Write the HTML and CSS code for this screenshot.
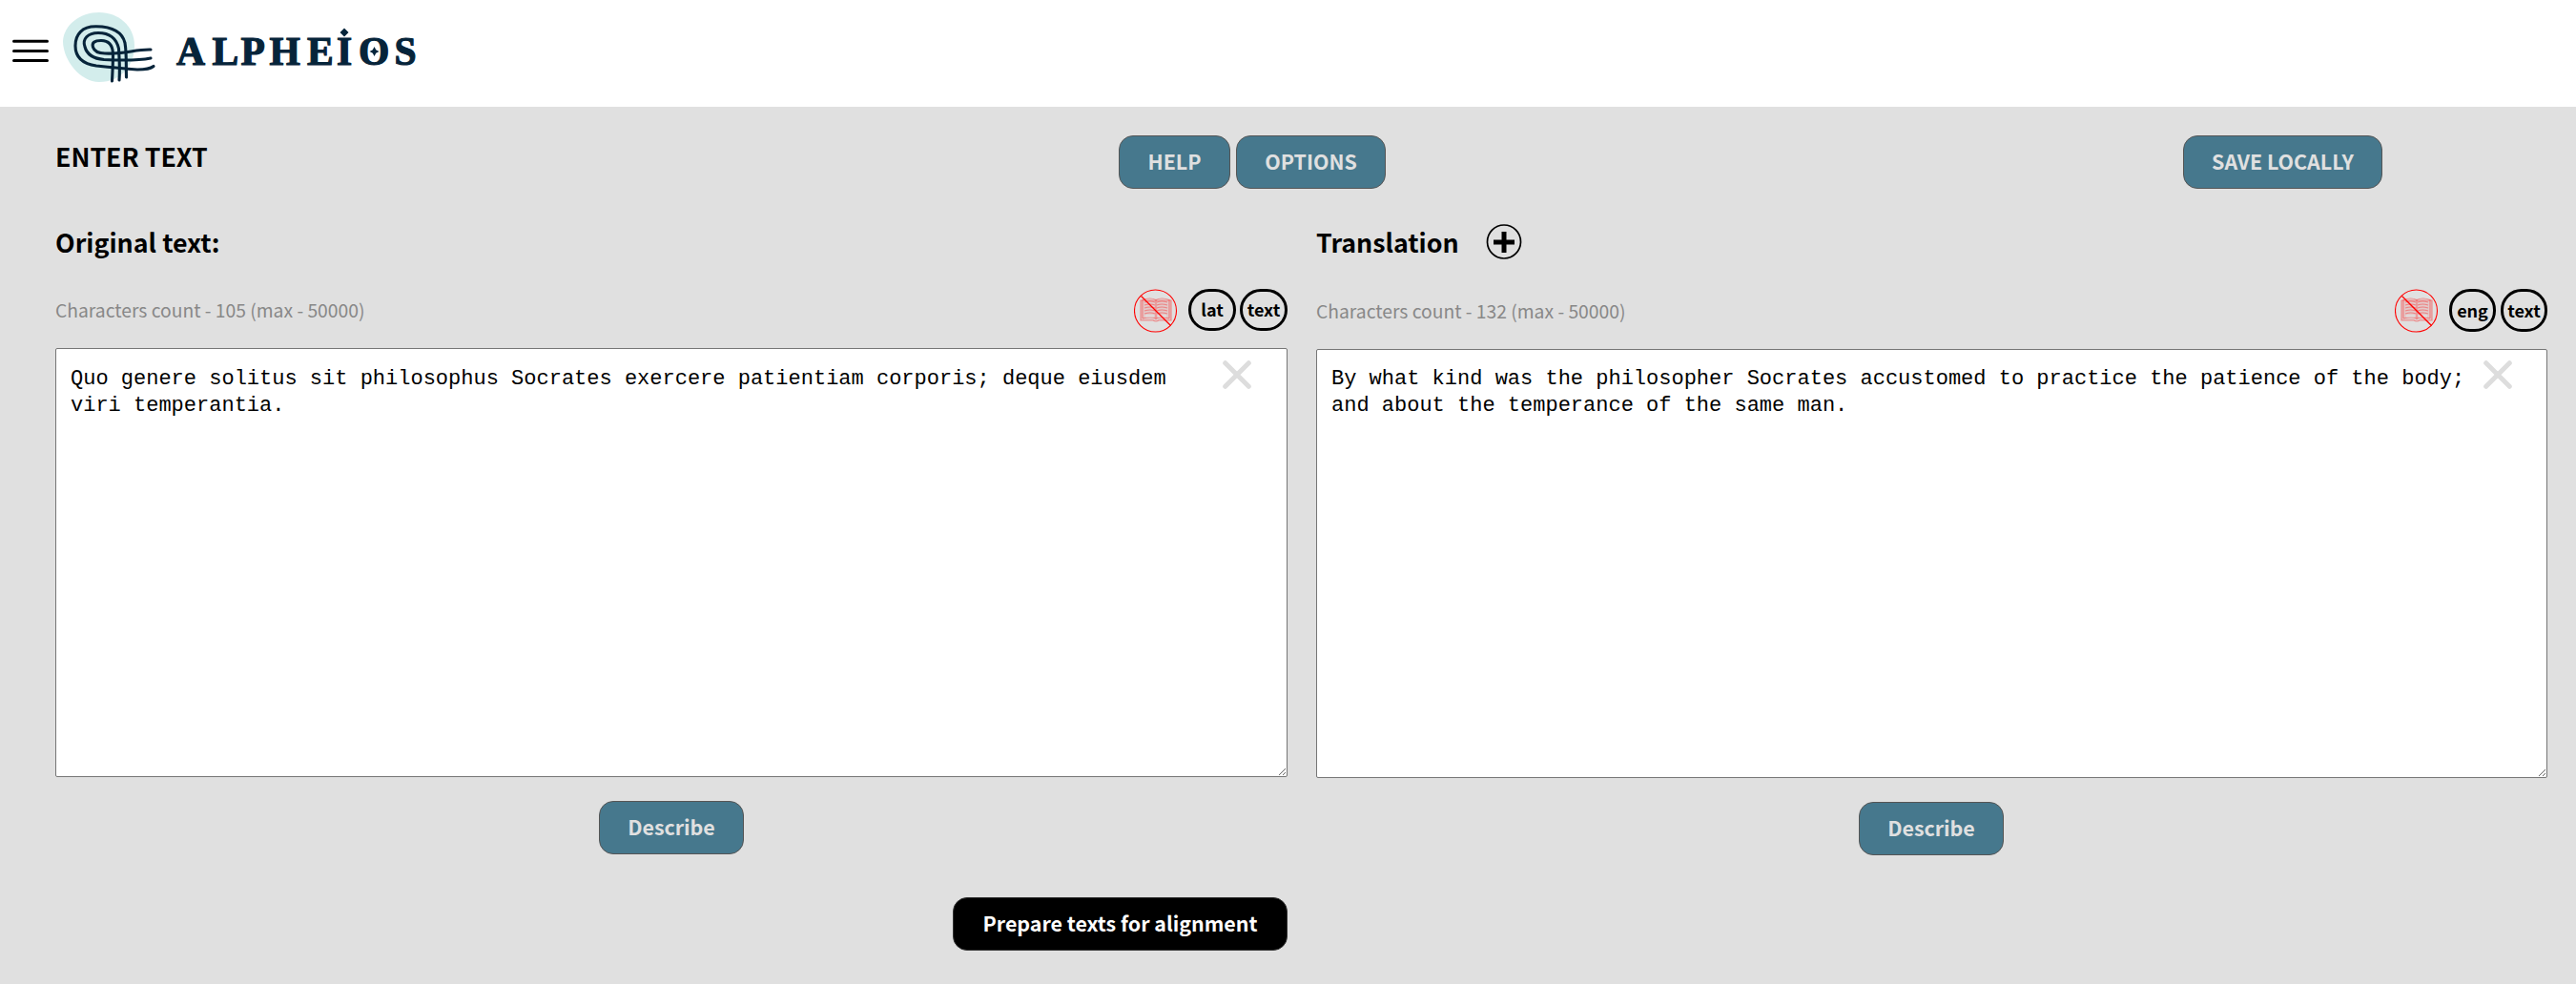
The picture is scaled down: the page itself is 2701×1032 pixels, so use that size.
FILE: index.html
```html
<!DOCTYPE html>
<html lang="en">
<head>
<meta charset="utf-8">
<title>Alpheios Alignment Editor</title>
<link rel="stylesheet" href="styles.css">
</head>
<body>
<svg class="symbols" width="0" height="0" aria-hidden="true">
  <symbol id="no-dictionary" viewBox="0 0 46 46">
    <g fill="none" stroke="#f00" stroke-opacity=".36" stroke-width="1.2">
      <path d="M7 12H39V33H26Q23 35 20 33H7Z" fill="#f00" fill-opacity=".1"/>
      <path d="M9 31V11.500Q17 8.500 23 11.500Q29 8.500 37 11.500V31M9 31Q18 28.500 23 31Q28 28.500 37 31M23 11V32M11 14q6-2 11 0M11 17q6-2 11 0M11 20q6-2 11 0M11 23q6-2 11 0M11 26q6-2 11 0M24 14q5-2 11 0M24 17q5-2 11 0M24 20q5-2 11 0M24 23q5-2 11 0M24 26q5-2 11 0"/>
      <path d="M12 27.500H21V29.500H12ZM25 27.500H34V29.500H25Z" fill="#e0e0e0" stroke="none"/>
    </g>
    <circle cx="22.500" cy="23" r="22" fill="none" stroke="#f00" stroke-width="1.1"/>
    <path d="M7.500 7.500L38.500 38.500" stroke="#f00" stroke-width="1.3"/>
  </symbol>
  <symbol id="clear" viewBox="0 0 30 30">
    <path d="M2.700 2.700L27.300 27.300M27.300 2.700L2.700 27.300" stroke="#ddd" stroke-width="5" stroke-linecap="round"/>
  </symbol>
</svg>

<header class="header">
  <svg class="menu" viewBox="0 0 38 25"><path d="M1.500 2.300H36.500M1.500 12.500H36.500M1.500 22.600H36.500" stroke="#000" stroke-width="3" stroke-linecap="round"/></svg>
  <svg class="logo" viewBox="66 0 380 100">
    <path d="M104 13C124 13 141 27 141 48C141 68 127 86 104 86C84 86 66 63 66 43C67 26 84 13 104 13Z" fill="#d3edec"/>
    <g fill="none" stroke="#06243a" stroke-width="3.100" stroke-linecap="round">
      <path d="M117.500 85C118 74 118.500 67 118.500 56C118 47 114 42.500 106 42.500C99 42.500 96 45 97.500 49.500C99 54 103 56 110 56C130 57 142 51.500 158 52"/>
      <path d="M125 84C126 72 125 62 124.500 51C122 40 114 34.500 103 34.500C92 34.500 86 41 89 49C91 57 98 61.500 109 62.500C130 63.500 145 63.500 158 61"/>
      <path d="M132.500 81C132 67 133 57 131 45C128 33 116 28 101 27.800C86 27.500 79 36 79 48C79 61 87 67 101 69C120 71 131 72 144 73C152 73 158 72 161 69.500"/>
    </g>
    <g class="wordmark"><text x="185 222.500 252.500 282.500 322 353 376 413.500" y="68">ALPHEIOS</text></g>
    <path d="M361 29.500L365.500 34L361 38.500L356.500 34ZM392.500 49l1.700 3.300 3.300 1.700-3.300 1.700-1.700 3.300-1.700-3.300-3.300-1.700 3.300-1.700Z" fill="#06243a"/>
  </svg>
</header>

<main class="editor">
  <div class="toolbar">
    <h1 class="title">ENTER TEXT</h1>
    <div class="actions">
      <button class="button help">HELP</button>
      <button class="button options">OPTIONS</button>
    </div>
    <button class="button save">SAVE LOCALLY</button>
  </div>

  <div class="columns">
    <section class="panel">
      <h2 class="heading">Original text:</h2>
      <div class="info">
        <span class="count">Characters count - 105 (max - 50000)</span>
        <svg class="dictionary"><use href="#no-dictionary"/></svg>
        <span class="badge">lat</span>
        <span class="badge">text</span>
      </div>
      <div class="field">
        <textarea class="text" spellcheck="false">Quo genere solitus sit philosophus Socrates exercere patientiam corporis; deque eiusdem viri temperantia.</textarea>
        <svg class="clear"><use href="#clear"/></svg>
      </div>
      <button class="button describe">Describe</button>
      <button class="button prepare">Prepare texts for alignment</button>
    </section>

    <section class="panel panel-translation">
      <div class="heading-row">
        <h2 class="heading">Translation</h2>
        <svg class="add" viewBox="0 0 38 38"><circle cx="19" cy="18.500" r="17.500" fill="none" stroke="#000" stroke-width="1.700"/><path d="M19 8V30M8 19H30" stroke="#000" stroke-width="5"/></svg>
      </div>
      <div class="info">
        <span class="count">Characters count - 132 (max - 50000)</span>
        <svg class="dictionary"><use href="#no-dictionary"/></svg>
        <span class="badge">eng</span>
        <span class="badge">text</span>
      </div>
      <div class="field">
        <textarea class="text" spellcheck="false">By what kind was the philosopher Socrates accustomed to practice the patience of the body; and about the temperance of the same man.</textarea>
        <svg class="clear"><use href="#clear"/></svg>
      </div>
      <button class="button describe">Describe</button>
    </section>
  </div>
</main>
</body>
</html>
```
FILE: styles.css
```css
* { box-sizing: border-box; }
body {
  margin: 0;
  background: #e0e0e0;
  color: #000;
  font-family: "Noto Sans CJK SC", "Open Sans", sans-serif;
  overflow: hidden;
}
.symbols { position: absolute; }
.header {
  display: flex;
  height: 112px;
  padding-left: 13px;
  background: #fff;
}
.menu { width: 38px; height: 25px; margin-top: 41px; }
.logo { width: 380px; height: 100px; margin-left: 15px; }
.wordmark {
  fill: #06243a;
  stroke: #06243a;
  stroke-width: 1.2px;
  font: bold 41.5px "Liberation Serif", serif;
}
.editor { height: 920px; padding: 30px 30px 0 58px; }
.toolbar {
  display: grid;
  grid-template-columns: 1115px 1116px auto;
  justify-items: start;
  height: 88px;
}
.title { margin: 2px 0 0; font-size: 26.7px; line-height: 40px; font-weight: 700; }
.actions { display: flex; gap: 6px; }
.button {
  display: block;
  height: 56px;
  padding: 0 0 3px;
  border: 1px solid #555;
  border-radius: 15px;
  background: #46788d;
  color: #e0e0e0;
  font: 700 21.4px/50px "Noto Sans CJK SC", "Open Sans", sans-serif;
  white-space: nowrap;
}
.help { width: 117px; }
.options { width: 157px; }
.save { width: 209px; }
.columns { display: grid; grid-template-columns: 1292px 1291px; gap: 30px; }
.panel { display: flex; flex-direction: column; }
.heading { margin: 0; height: 73px; font-size: 26.8px; line-height: 48px; font-weight: 700; }
.heading-row { display: flex; gap: 28px; }
.add { width: 38px; height: 38px; margin-top: 5px; }
.info { display: flex; height: 62px; }
.panel-translation .info { height: 63px; }
.count { flex: 1; color: #888; font-size: 19.3px; line-height: 45px; }
.panel-translation .count { line-height: 46px; }
.dictionary { width: 46px; height: 46px; margin-right: 11px; }
.badge {
  width: 50px;
  height: 44px;
  border: 3px solid #000;
  border-radius: 22px;
  text-align: center;
  font-size: 18px;
  line-height: 36px;
  font-weight: 700;
}
.badge + .badge { margin-left: 4px; }
.panel-translation .badge { width: 49px; height: 45px; line-height: 38px; }
.panel-translation .badge + .badge { margin-left: 5px; }
.panel-translation .dictionary { margin-right: 11px; }
.field { position: relative; height: 450px; }
.text {
  display: block;
  width: 100%;
  height: 100%;
  padding: 18px 70px 16px 15px;
  border: 1px solid #767676;
  border-radius: 2px;
  background: #fff;
  color: #000;
  font: 22px/28px "Liberation Mono", monospace;
  outline: 0;
}
.panel-translation .text { padding-top: 17px; }
.clear { position: absolute; top: 13px; right: 38px; width: 30px; height: 30px; }
.panel-translation .clear { top: 12px; right: 37px; }
.describe { width: 152px; margin-top: 25px; align-self: center; }
.panel-translation .describe { margin-right: 1px; }
.prepare {
  width: 351px;
  margin-top: 45px;
  align-self: flex-end;
  border-color: #333;
  background: #000;
  color: #fff;
}
```
